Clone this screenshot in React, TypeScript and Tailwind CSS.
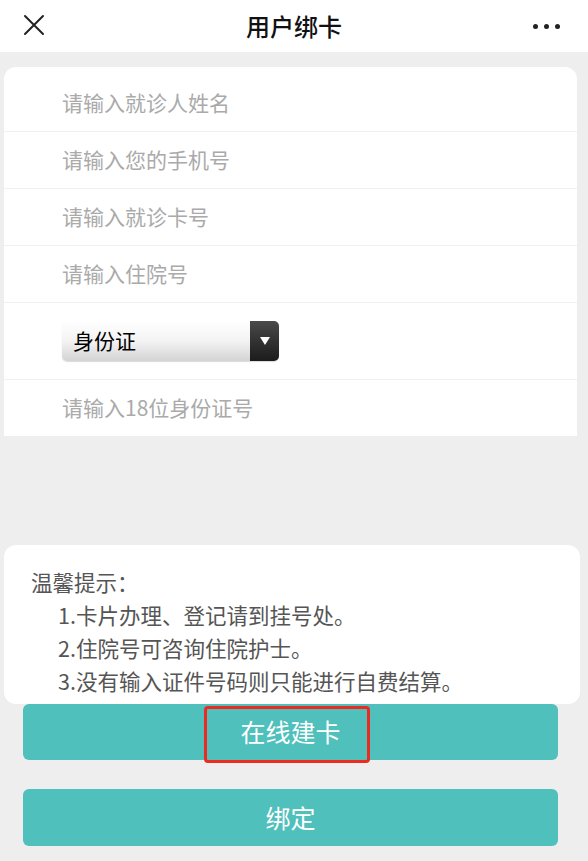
import React from "react";

const font = { fontFamily: '"Noto Sans CJK SC", "Noto Sans", sans-serif' };

const fields = ["请输入就诊人姓名", "请输入您的手机号", "请输入就诊卡号", "请输入住院号"];

const tips = ["1.卡片办理、登记请到挂号处。", "2.住院号可咨询住院护士。", "3.没有输入证件号码则只能进行自费结算。"];

function Header() {
  return (
    <div className="h-[52px] bg-white flex items-center justify-between px-[23px] relative">
      <svg width="22" height="22" viewBox="0 0 22 22" className="mt-[-2px]">
        <path d="M2 2 L20 20 M20 2 L2 20" stroke="#222" strokeWidth="2" strokeLinecap="round" />
      </svg>
      <h1 className="absolute left-0 right-0 text-center text-[24px] font-medium text-[#111] pointer-events-none">
        用户绑卡
      </h1>
      <div className="flex gap-[6px] mr-[5px]">
        <span className="w-[5px] h-[5px] rounded-full bg-[#222]" />
        <span className="w-[5px] h-[5px] rounded-full bg-[#222]" />
        <span className="w-[5px] h-[5px] rounded-full bg-[#222]" />
      </div>
    </div>
  );
}

function Row({ children, last }: { children: React.ReactNode; last?: boolean }) {
  return (
    <div className={`flex items-center pl-[58px] ${last ? "" : "border-b border-[#f0f0f0]"}`}>
      {children}
    </div>
  );
}

export default function App() {
  return (
    <div className="w-[588px] h-[861px] bg-[#eeeeee] overflow-hidden" style={font}>
      <Header />

      {/* Form */}
      <div className="pt-[15px] pl-[4px] pr-[11px]">
        <div className="bg-white rounded-t-[12px] pt-[8px]">
          {fields.map((f) => (
            <Row key={f}>
              <div className="h-[56px] flex items-center text-[21px] text-[#aaaaaa]">{f}</div>
            </Row>
          ))}
          <Row>
            <div className="h-[76px] flex items-center">
              <div className="w-[217px] h-[40px] rounded-[5px] flex overflow-hidden shadow-[0_1px_1px_rgba(0,0,0,0.15)] bg-gradient-to-b from-white via-[#f3f3f3] to-[#d4d4d4]">
                <div className="flex-1 flex items-center pl-[11px] text-[21px] text-black">身份证</div>
                <div className="w-[29px] bg-gradient-to-b from-[#4a4a4a] to-[#1c1c1c] flex items-center justify-center">
                  <svg width="10" height="8" viewBox="0 0 10 8">
                    <path d="M0 0 L10 0 L5 8 Z" fill="#fff" />
                  </svg>
                </div>
              </div>
            </div>
          </Row>
          <Row last>
            <div className="h-[56px] flex items-center text-[21px] text-[#aaaaaa]">请输入18位身份证号</div>
          </Row>
        </div>
      </div>

      {/* Tips */}
      <div className="mt-[109px] px-[4px] pr-[8px]">
        <div className="bg-white rounded-[12px] h-[159px] pt-[20px] pl-[27px] text-[21.5px] leading-[33px] text-[#555555]">
          <p>温馨提示：</p>
          {tips.map((t) => (
            <p key={t} className="pl-[27px]">
              {t}
            </p>
          ))}
        </div>
      </div>

      {/* Buttons */}
      <div className="px-[23px] pr-[30px] flex flex-col gap-[29px]">
        <button className="h-[56px] rounded-[6px] bg-[#4fc0bc] text-white text-[25px] flex items-center justify-center relative">
          <span className="absolute left-[181px] top-[2px] w-[166px] h-[57px] border-[3px] border-[#ec2a1f] rounded-[4px]" />
          在线建卡
        </button>
        <button className="h-[57px] rounded-[6px] bg-[#4fc0bc] text-white text-[25px] flex items-center justify-center">
          绑定
        </button>
      </div>
    </div>
  );
}
